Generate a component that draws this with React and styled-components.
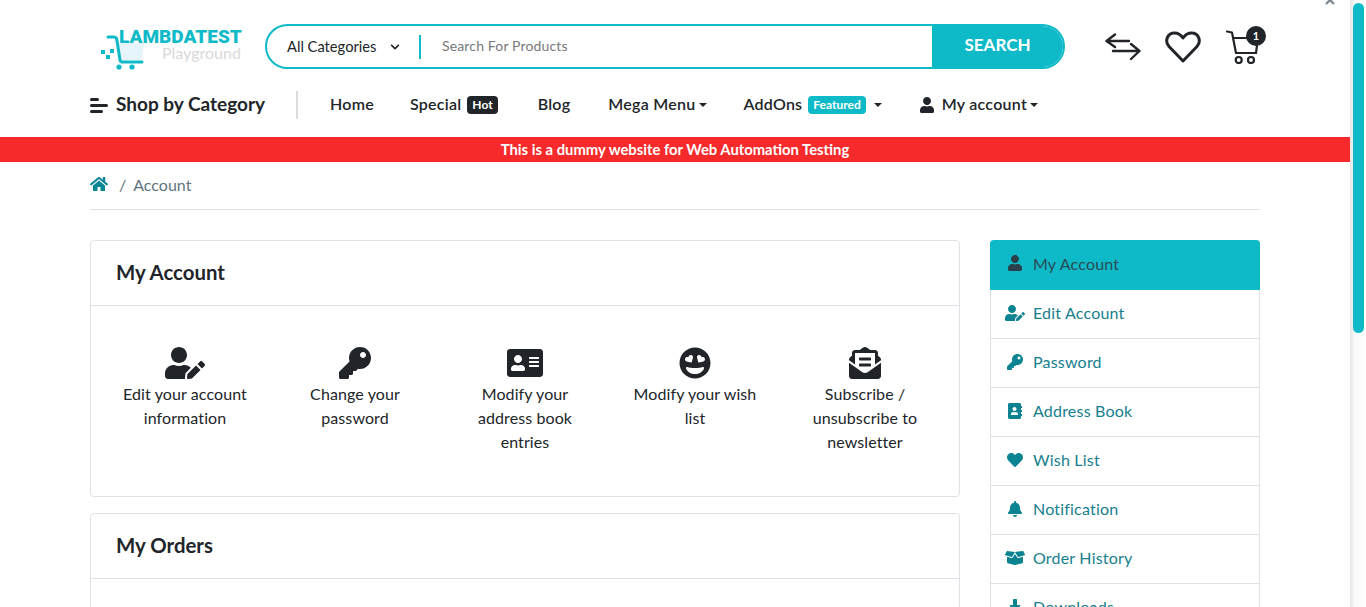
import React from 'react';
import styled, { createGlobalStyle } from 'styled-components';
import { FaUser, FaUserEdit, FaKey, FaAddressCard, FaGrinHearts, FaEnvelopeOpenText, FaAddressBook, FaHeart, FaBell, FaBoxOpen, FaDownload, FaHome, FaChevronDown } from 'react-icons/fa';

const teal = '#0fbac8';
const dark = '#212529';
const font = '"Lato", "Open Sans", sans-serif';

const GlobalStyle = createGlobalStyle`
  html, body { margin: 0; padding: 0; height: 100%; overflow: hidden; background: #fff; }
  body { font-family: ${font}; font-size: 16px; color: ${dark}; }
  * { box-sizing: border-box; }
`;

const Shell = styled.div`
  display: flex;
  height: 607px;
  overflow: hidden;
  position: relative;
`;

const Page = styled.div`
  flex: 1;
  min-width: 0;
  overflow: hidden;
`;

const Rail = styled.div`
  width: 16px;
  flex: none;
  background: linear-gradient(90deg, #e6e6e6, #f8f8f8 30%, #fff);
  padding: 3px 2px 0 3px;
`;

const Thumb = styled.div`
  height: 330px;
  background: ${teal};
  border-radius: 6px;
`;

const Dismiss = styled.span`
  position: absolute;
  top: -6px;
  left: 1324px;
  width: 12px;
  height: 12px;
  color: #7d8a94;
  display: flex;
`;

const Container = styled.div`
  width: 1170px;
  margin: 0 auto;
`;

const TopRow = styled.div`
  display: flex;
  align-items: flex-start;
  height: 83px;
  padding: 24px 0 0 10px;
`;

const Logo = styled.a`
  width: 165px;
  flex: none;
  display: flex;
  position: relative;
  height: 46px;
`;

const LogoMark = styled.svg`
  position: absolute;
  left: 0;
  top: 0;
`;

const LogoName = styled.span`
  position: absolute;
  left: 19px;
  top: 6px;
  font: 900 19px/14px "Roboto", sans-serif;
  color: ${teal};
`;

const LogoSub = styled.span`
  position: absolute;
  left: 62px;
  top: 21px;
  font: 400 16px/16px ${font};
  color: #d9d9d9;
`;

const Search = styled.div`
  width: 800px;
  height: 45px;
  flex: none;
  display: flex;
  align-items: center;
  border: 2px solid ${teal};
  border-radius: 23px;
  overflow: hidden;
`;

const CategorySelect = styled.div`
  width: 152px;
  flex: none;
  padding: 0 19px 2px 20px;
  display: flex;
  align-items: center;
  justify-content: space-between;
  font-size: 14.7px;
  svg { font-size: 10px; margin-top: 2px; }
`;

const SearchInput = styled.div`
  flex: 1;
  height: 24px;
  border-left: 2px solid ${teal};
  padding-left: 21px;
  font-size: 14px;
  letter-spacing: 0.15px;
  line-height: 22px;
  color: #77797b;
`;

const SearchButton = styled.button`
  width: 133px;
  height: 45px;
  flex: none;
  border: 0;
  padding: 0 2px 4px 0;
  background: ${teal};
  color: #fff;
  font: 700 17px ${font};
  border-radius: 0 23px 23px 0;
  box-shadow: inset -1px 0 0 rgba(255, 255, 255, 0.35);
  margin-right: -2px;
`;

const Tools = styled.div`
  display: flex;
  align-items: center;
  height: 45px;
  margin-left: 40px;
  gap: 24px;
`;

const CartTool = styled.span`
  position: relative;
  display: flex;
  margin-left: 1px;
`;

const CartCount = styled.span`
  position: absolute;
  top: -4px;
  right: -7px;
  width: 20px;
  height: 20px;
  border-radius: 50%;
  background: ${dark};
  color: #fff;
  font: 700 11px/19px ${font};
  text-align: center;
`;

const NavRow = styled.nav`
  display: flex;
  align-items: center;
  height: 44px;
  margin-bottom: 10px;
`;

const CategoryToggle = styled.div`
  display: flex;
  align-items: center;
  gap: 8px;
  width: 208px;
  height: 28px;
  border-right: 2px solid #dcdcdc;
  font-size: 19px;
  font-weight: 700;
  padding-bottom: 4px;
`;

const Bars = styled.span`
  display: flex;
  flex-direction: column;
  gap: 3px;
  margin-top: 4px;
  i { display: block; height: 3px; border-radius: 2px; background: ${dark}; }
  i:nth-child(1) { width: 9px; }
  i:nth-child(2) { width: 18px; }
  i:nth-child(3) { width: 13px; }
`;

const NavItem = styled.a`
  display: flex;
  align-items: center;
  font-size: 16px;
  font-weight: 600;
  letter-spacing: 0.25px;
  line-height: 20px;
  padding-bottom: 2px;
  margin-left: ${p => p.$gap}px;
  white-space: nowrap;
  svg { margin-right: 7px; margin-top: 2px; }
`;

const Caret = styled.span`
  display: inline-block;
  margin: 2px 0 0 ${p => p.$gap || 4}px;
  border-top: 4px solid ${dark};
  border-left: 4px solid transparent;
  border-right: 4px solid transparent;
`;

const Tag = styled.span`
  margin: 2px 0 0 ${p => p.$gap}px;
  padding: 0 ${p => p.$pad}px;
  height: 18px;
  border-radius: 4px;
  background: ${p => p.$bg};
  color: #fff;
  font-size: 12px;
  font-weight: 700;
  letter-spacing: 0;
  line-height: 17px;
`;

const Banner = styled.div`
  height: 25px;
  background: #f62a2a;
  color: #fff;
  font-size: 14.8px;
  font-weight: 700;
  line-height: 24px;
  text-align: center;
`;

const Crumbs = styled.div`
  display: flex;
  align-items: center;
  height: 48px;
  border-bottom: 1px solid #dee2e6;
  color: #5f7480;
  padding-bottom: 3px;
  svg { color: #0d8693; font-size: 18px; }
`;

const CrumbSep = styled.span`
  margin: 0 7px 0 11px;
`;

const Columns = styled.div`
  display: flex;
  justify-content: space-between;
  align-items: flex-start;
  margin-top: 30px;
`;

const MainColumn = styled.div`
  width: 870px;
`;

const Card = styled.section`
  border: 1px solid #dee2e6;
  border-radius: 4px;
  margin-bottom: 16px;
`;

const CardTitle = styled.h2`
  margin: 0;
  height: 65px;
  padding: 0 25px;
  font-size: 20.4px;
  font-weight: 700;
  line-height: 62px;
  border-bottom: 1px solid #dee2e6;
`;

const TileRow = styled.div`
  display: grid;
  grid-template-columns: repeat(5, 170px);
  min-height: 190px;
  padding-top: 41px;
  justify-content: center;
`;

const Tile = styled.a`
  display: flex;
  flex-direction: column;
  align-items: center;
  padding: 0 15px;
  text-align: center;
  line-height: 24px;
  letter-spacing: 0.1px;
  svg { height: 32px; width: ${p => p.$iconWidth}px; margin-bottom: 3px; }
`;

const Sidebar = styled.div`
  width: 270px;
`;

const SideItem = styled.a`
  display: flex;
  align-items: center;
  height: ${p => (p.$active ? 50 : 49)}px;
  padding: 0 0 3px 14px;
  letter-spacing: 0.2px;
  background: ${p => (p.$active ? teal : '#fff')};
  color: ${p => (p.$active ? '#2a4a55' : '#16808e')};
  border: 1px solid ${p => (p.$active ? teal : '#dee2e6')};
  border-top: 0;
  border-radius: ${p => (p.$active ? '4px 4px 0 0' : 0)};
`;

const SideIcon = styled.span`
  width: 28px;
  flex: none;
  display: flex;
  justify-content: ${p => (p.$wide ? 'flex-start' : 'center')};
  padding-right: 8px;
  color: ${p => (p.$active ? '#2a3f4a' : '#0b8390')};
  svg { height: 16px; width: ${p => (p.$wide ? 20 : 16)}px; flex: none; }
`;

const tiles = [
  { Icon: FaUserEdit, label: 'Edit your account information', iconWidth: 40 },
  { Icon: FaKey, label: 'Change your password', iconWidth: 32 },
  { Icon: FaAddressCard, label: 'Modify your address book entries', iconWidth: 36 },
  { Icon: FaGrinHearts, label: 'Modify your wish list', iconWidth: 32 },
  { Icon: FaEnvelopeOpenText, label: 'Subscribe / unsubscribe to newsletter', iconWidth: 32 },
];

const sideLinks = [
  { Icon: FaUser, label: 'My Account', active: true },
  { Icon: FaUserEdit, label: 'Edit Account', wide: true },
  { Icon: FaKey, label: 'Password' },
  { Icon: FaAddressBook, label: 'Address Book' },
  { Icon: FaHeart, label: 'Wish List' },
  { Icon: FaBell, label: 'Notification' },
  { Icon: FaBoxOpen, label: 'Order History', wide: true },
  { Icon: FaDownload, label: 'Downloads' },
];

const SwapIcon = () => (
  <svg width="36" height="28" viewBox="0 0 36 28" fill="none" stroke={dark} strokeWidth="2.4" strokeLinecap="round" strokeLinejoin="round">
    <path d="M10 1.500 1.500 8 10 14M2 8h22M26 11l8.500 7L26 26M34 18H8" />
  </svg>
);

const HeartIcon = () => (
  <svg width="36" height="32" viewBox="0 0 36 32" fill="none" stroke={dark} strokeWidth="3" strokeLinecap="round" strokeLinejoin="round">
    <path d="M18 30 4 15.500C-.5 10.500 2 2 9.500 2 13.500 2 16 4 18 7c2-3 4.500-5 8.500-5C34 2 36.500 10.500 32 15.500z" />
  </svg>
);

const CartIcon = () => (
  <svg width="33" height="34" viewBox="0 0 33 34" fill="none" stroke={dark} strokeWidth="2.2" strokeLinecap="round" strokeLinejoin="round">
    <path d="M1 1.500l5 1L10 23h20" />
    <path d="M7 8h25l-2 15" />
    <circle cx="12.700" cy="30" r="3" />
    <circle cx="25" cy="30" r="3" />
  </svg>
);

const CartMark = () => (
  <LogoMark width="46" height="46" viewBox="0 0 46 46">
    <path d="M18 19h26l-2 17H20z" fill="#e6f4fb" />
    <path d="M8 13h6c1.500 0 2.500 1 2.800 2.500L20 36c.2 1.200 1 2 2 2h20" fill="none" stroke={teal} strokeWidth="3" strokeLinecap="round" />
    <circle cx="19" cy="43" r="2.600" fill={teal} />
    <circle cx="32" cy="43" r="2.600" fill={teal} />
    <path d="M1 26h4v4H1zM6 31h4v4H6zM10 25h4v4h-4z" fill={teal} />
  </LogoMark>
);

export default function App() {
  return (
    <>
      <GlobalStyle />
      <Shell>
        <Page>
          <Container>
            <TopRow>
              <Logo>
                <CartMark />
                <LogoName>LAMBDATEST</LogoName>
                <LogoSub>Playground</LogoSub>
              </Logo>
              <Search>
                <CategorySelect>All Categories <FaChevronDown /></CategorySelect>
                <SearchInput>Search For Products</SearchInput>
                <SearchButton>SEARCH</SearchButton>
              </Search>
              <Tools>
                <SwapIcon />
                <HeartIcon />
                <CartTool>
                  <CartIcon />
                  <CartCount>1</CartCount>
                </CartTool>
              </Tools>
            </TopRow>
            <NavRow>
              <CategoryToggle>
                <Bars><i /><i /><i /></Bars>
                Shop by Category
              </CategoryToggle>
              <NavItem $gap={32}>Home</NavItem>
              <NavItem $gap={36}>Special<Tag $bg={dark} $gap={6} $pad={5}>Hot</Tag></NavItem>
              <NavItem $gap={40}>Blog</NavItem>
              <NavItem $gap={38}>Mega Menu<Caret $gap={4} /></NavItem>
              <NavItem $gap={36}>AddOns<Tag $bg={teal} $gap={6} $pad={5}>Featured</Tag><Caret $gap={8} /></NavItem>
              <NavItem $gap={37}><FaUser />My account<Caret $gap={3} /></NavItem>
            </NavRow>
          </Container>
          <Banner>This is a dummy website for Web Automation Testing</Banner>
          <Container>
            <Crumbs>
              <FaHome />
              <CrumbSep>/</CrumbSep>
              Account
            </Crumbs>
            <Columns>
              <MainColumn>
                <Card>
                  <CardTitle>My Account</CardTitle>
                  <TileRow>
                    {tiles.map(({ Icon, label, iconWidth }) => (
                      <Tile key={label} $iconWidth={iconWidth}><Icon />{label}</Tile>
                    ))}
                  </TileRow>
                </Card>
                <Card>
                  <CardTitle>My Orders</CardTitle>
                  <TileRow />
                </Card>
              </MainColumn>
              <Sidebar>
                {sideLinks.map(({ Icon, label, active, wide }) => (
                  <SideItem key={label} $active={active}>
                    <SideIcon $active={active} $wide={wide}><Icon /></SideIcon>
                    {label}
                  </SideItem>
                ))}
              </Sidebar>
            </Columns>
          </Container>
        </Page>
        <Rail><Thumb /></Rail>
        <Dismiss>
          <svg width="12" height="12" viewBox="0 0 12 12" fill="none" stroke="currentColor" strokeWidth="2.4"><path d="M2 2l8 8M10 2l-8 8" /></svg>
        </Dismiss>
      </Shell>
    </>
  );
}
